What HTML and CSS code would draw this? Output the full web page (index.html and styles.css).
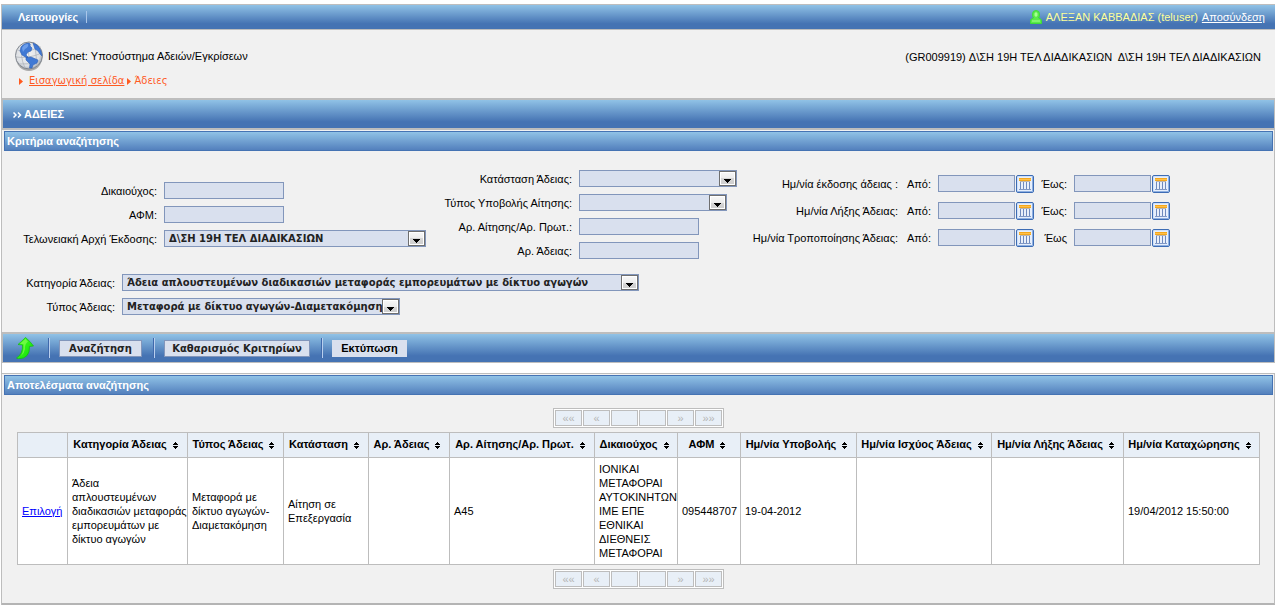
FILE: index.html
```html
<!DOCTYPE html>
<html lang="el">
<head>
<meta charset="utf-8">
<title>ICISnet: Υποσύστημα Αδειών/Εγκρίσεων</title>
<link rel="stylesheet" href="styles.css">
</head>
<body>
<svg class="defs" aria-hidden="true">
  <defs>
    <linearGradient id="btnFace" x1="0" y1="0" x2="0" y2="1"><stop offset="0" stop-color="#f6f6f6"/><stop offset=".5" stop-color="#ececec"/><stop offset=".5" stop-color="#d6d6d6"/><stop offset="1" stop-color="#cfcfcf"/></linearGradient>
    <radialGradient id="globeFace" cx=".45" cy=".45" r=".55"><stop offset="0" stop-color="#f4f4f4"/><stop offset=".8" stop-color="#dcdfe3"/><stop offset="1" stop-color="#a9afb8"/></radialGradient>
    <linearGradient id="green" x1="0" y1="0" x2="1" y2="1"><stop offset="0" stop-color="#4dff20"/><stop offset="1" stop-color="#0be00a"/></linearGradient>
    <symbol id="drop" viewBox="0 0 17 15"><rect x=".5" y=".5" width="16" height="14" fill="#fff" stroke="#6f6f6f"/><rect x="2" y="2" width="13" height="11" fill="url(#btnFace)"/><path d="M5 8h7v1h-1v1h-1v1H9v1H8v-1H7v-1H6V9H5z" fill="#000"/></symbol>
    <symbol id="cal" viewBox="0 0 18 18"><rect x=".5" y=".5" width="17" height="17" rx="1.5" fill="#cfe0f8" stroke="#3d6cb4"/><path d="M16.5 1v15.500H1" fill="none" stroke="#8fb0e2"/><rect x="2" y="2" width="14" height="14" fill="#e6effc"/><rect x="3" y="3" width="12" height="3" fill="#f5a81c"/><path d="M3 4.500h12" stroke="#ffc04a"/><path d="M4 6.500h10" stroke="#b9b4b0"/><rect x="4" y="7" width="10" height="8" fill="#fff"/><path d="M4.500 7v8M7.500 7v8M10.500 7v8M13.500 7v8" stroke="#6f8abd"/><path d="M6 7v8M9 7v8M12 7v8" stroke="#d4e0f5"/><path d="M3 14.500h12" stroke="#8098c6"/></symbol>
    <symbol id="sort" viewBox="0 0 5 7"><path d="M2 0h1v1h1v1h1v1H0V2h1V1h1zM0 4h5v1H4v1H3v1H2V6H1V5H0z" fill="#000"/></symbol>
    <symbol id="crumb" viewBox="0 0 4 7"><path d="M0 0l4 3.500L0 7z" fill="#ff5a1f"/></symbol>
  </defs>
</svg>
<div class="page">
  <header class="topbar">
    <nav class="menu"><a class="menu-item" href="#">Λειτουργίες</a></nav>
    <div class="user">
      <svg class="user-icon" viewBox="0 0 12 14" aria-hidden="true"><path d="M2.500 4Q2.500 .5 6 .5T9.500 4Q9.500 7 8.500 8Q11.500 8.500 11.500 11v2.500H.5V11Q.5 8.500 3.500 8Q2.500 7 2.500 4z" fill="#5be94b" stroke="#3fdc38"/><path d="M4.500 3.500Q6 1 7.500 3.500v2Q6 8 4.500 5.500zM2 10.500h8v1H2z" fill="#a5ff91"/></svg>
      <span class="user-name">ΑΛΕΞΑΝ ΚΑΒΒΑΔΙΑΣ (teluser)</span>
      <a class="logout" href="#">Αποσύνδεση</a>
    </div>
  </header>

  <div class="masthead">
    <div class="brand">
      <div class="brand-row">
        <svg class="globe" viewBox="0 0 30 30" aria-hidden="true"><ellipse cx="15" cy="17" rx="13" ry="13" fill="#8b8b8b" opacity=".7"/><circle cx="15" cy="14.500" r="13.500" fill="url(#globeFace)" stroke="#80868e"/><path d="M3 9Q12 12 27 6M2 16Q14 18 28 12M5 23Q15 24 26 20M9 3Q5 14 11 27M15 2Q13 14 18 27M21 3Q22 14 23 25" fill="none" stroke="#b0b5bc" stroke-width=".8"/><path d="M7 6Q10 2 15 2Q17 3 16 5L18 7L17 10L14 11L12 14L14 16L13 17L8 14L6 10zM19 2Q25 4 27 10L28 15L26 13L24 10L21 8L20 5zM12 16.500L17 16L24 19L23 22L19 24L18 27L15.500 27L16 23L12 19z" fill="#4079d4" stroke="#2f62b8" stroke-width=".6"/><path d="M8 7Q10 3 14 3Q15 6 11 8L9 11z" fill="#6c9eea"/></svg>
        <span>ICISnet: Υποσύστημα Αδειών/Εγκρίσεων</span>
      </div>
      <nav class="crumbs">
        <svg class="crumb-icon" aria-hidden="true"><use href="#crumb"/></svg>
        <a class="crumb-home" href="#">Εισαγωγική σελίδα</a>
        <svg class="crumb-icon" aria-hidden="true"><use href="#crumb"/></svg>
        <span>Άδειες</span>
      </nav>
    </div>
    <div class="office">(GR009919) Δ\ΣΗ 19Η ΤΕΛ ΔΙΑΔΙΚΑΣΙΩΝ&nbsp; Δ\ΣΗ 19Η ΤΕΛ ΔΙΑΔΙΚΑΣΙΩΝ</div>
  </div>

  <h1 class="title-bar"><svg class="chevrons" viewBox="0 0 9 6" aria-hidden="true"><path d="M.5 .5L3 3L.5 5.500M5 .5L7.500 3L5 5.500" fill="none" stroke="#fff" stroke-width="1.500"/></svg>ΑΔΕΙΕΣ</h1>

  <form class="criteria">
    <h2 class="panel-head">Κριτήρια αναζήτησης</h2>
    <div class="fields">
      <div class="group holder">
        <label for="holder">Δικαιούχος:</label><input class="box" id="holder" type="text">
        <label for="afm">ΑΦΜ:</label><input class="box" id="afm" type="text">
        <label for="customs">Τελωνειακή Αρχή Έκδοσης:</label>
        <span class="drop w-customs"><select class="box" id="customs"><option>Δ\ΣΗ 19Η ΤΕΛ ΔΙΑΔΙΚΑΣΙΩΝ</option></select><svg class="arrow" aria-hidden="true"><use href="#drop"/></svg></span>
      </div>
      <div class="group request">
        <label for="state">Κατάσταση Άδειας:</label>
        <span class="drop w-state"><select class="box" id="state"><option></option></select><svg class="arrow" aria-hidden="true"><use href="#drop"/></svg></span>
        <label for="submit-type">Τύπος Υποβολής Αίτησης:</label>
        <span class="drop w-submit"><select class="box" id="submit-type"><option></option></select><svg class="arrow" aria-hidden="true"><use href="#drop"/></svg></span>
        <label for="protocol">Αρ. Αίτησης/Αρ. Πρωτ.:</label><input class="box" id="protocol" type="text">
        <label for="number">Αρ. Άδειας:</label><input class="box" id="number" type="text">
      </div>
      <div class="dates">
        <span class="date-name">Ημ/νία έκδοσης άδειας :</span>
        <label for="d1">Από:</label><span class="date"><input class="box" id="d1" type="text"><button class="cal" type="button" aria-label="Ημερολόγιο"><svg aria-hidden="true"><use href="#cal"/></svg></button></span>
        <label for="d2">Έως:</label><span class="date"><input class="box" id="d2" type="text"><button class="cal" type="button" aria-label="Ημερολόγιο"><svg aria-hidden="true"><use href="#cal"/></svg></button></span>
        <span class="date-name">Ημ/νία Λήξης Άδειας:</span>
        <label for="d3">Από:</label><span class="date"><input class="box" id="d3" type="text"><button class="cal" type="button" aria-label="Ημερολόγιο"><svg aria-hidden="true"><use href="#cal"/></svg></button></span>
        <label for="d4">Έως:</label><span class="date"><input class="box" id="d4" type="text"><button class="cal" type="button" aria-label="Ημερολόγιο"><svg aria-hidden="true"><use href="#cal"/></svg></button></span>
        <span class="date-name">Ημ/νία Τροποποίησης Άδειας:</span>
        <label for="d5">Από:</label><span class="date"><input class="box" id="d5" type="text"><button class="cal" type="button" aria-label="Ημερολόγιο"><svg aria-hidden="true"><use href="#cal"/></svg></button></span>
        <label for="d6">Έως</label><span class="date"><input class="box" id="d6" type="text"><button class="cal" type="button" aria-label="Ημερολόγιο"><svg aria-hidden="true"><use href="#cal"/></svg></button></span>
      </div>
    </div>
    <div class="group kind">
      <label for="category">Κατηγορία Άδειας:</label>
      <span class="drop w-category"><select class="box" id="category"><option>Άδεια απλουστευμένων διαδικασιών μεταφοράς εμπορευμάτων με δίκτυο αγωγών</option></select><svg class="arrow" aria-hidden="true"><use href="#drop"/></svg></span>
      <label for="type">Τύπος Άδειας:</label>
      <span class="drop w-type"><select class="box" id="type"><option>Μεταφορά με δίκτυο αγωγών-Διαμετακόμηση</option></select><svg class="arrow" aria-hidden="true"><use href="#drop"/></svg></span>
    </div>
    <div class="toolbar">
      <button class="back" type="button" aria-label="Επιστροφή"><svg viewBox="0 0 18 22" aria-hidden="true"><path d="M.5 21Q7 17 6.500 8L2 7.500Q6 4 9.500 .5Q14 4 17.500 9L13.500 9.500Q14 21.500 2.500 21.800z" fill="url(#green)" stroke="#12b810" stroke-width=".7"/><path d="M4 6.800L9.500 2L12 4.500Q8.500 7 9 12Q8.500 16 5 19Q8 14 7.500 7.200z" fill="#a4ff6b" opacity=".5"/></svg></button>
      <button class="btn w-search" type="button">Αναζήτηση</button>
      <button class="btn w-clear" type="button">Καθαρισμός Κριτηρίων</button>
      <button class="btn print" type="button">Εκτύπωση</button>
    </div>
  </form>

  <section class="results">
    <h2 class="panel-head">Αποτελέσματα αναζήτησης</h2>
    <div class="results-body">
      <div class="pager"><span>««</span><span>«</span><span></span><span></span><span>»</span><span>»»</span></div>
      <table class="grid">
        <colgroup><col class="c1"><col class="c2"><col class="c3"><col class="c4"><col class="c5"><col class="c6"><col class="c7"><col class="c8"><col class="c9"><col class="c10"><col class="c11"><col class="c12"></colgroup>
        <thead><tr>
          <th></th>
          <th>Κατηγορία Άδειας<svg class="sort"><use href="#sort"/></svg></th>
          <th>Τύπος Άδειας<svg class="sort"><use href="#sort"/></svg></th>
          <th>Κατάσταση<svg class="sort"><use href="#sort"/></svg></th>
          <th>Αρ. Άδειας<svg class="sort"><use href="#sort"/></svg></th>
          <th>Αρ. Αίτησης/Αρ. Πρωτ.<svg class="sort"><use href="#sort"/></svg></th>
          <th>Δικαιούχος<svg class="sort"><use href="#sort"/></svg></th>
          <th>ΑΦΜ<svg class="sort"><use href="#sort"/></svg></th>
          <th>Ημ/νία Υποβολής<svg class="sort"><use href="#sort"/></svg></th>
          <th>Ημ/νία Ισχύος Άδειας<svg class="sort"><use href="#sort"/></svg></th>
          <th>Ημ/νία Λήξης Άδειας<svg class="sort"><use href="#sort"/></svg></th>
          <th>Ημ/νία Καταχώρησης<svg class="sort"><use href="#sort"/></svg></th>
        </tr></thead>
        <tbody><tr>
          <td><a href="#">Επιλογή</a></td>
          <td>Άδεια<br>απλουστευμένων<br>διαδικασιών μεταφοράς<br>εμπορευμάτων με<br>δίκτυο αγωγών</td>
          <td>Μεταφορά με<br>δίκτυο αγωγών-<br>Διαμετακόμηση</td>
          <td>Αίτηση σε<br>Επεξεργασία</td>
          <td></td>
          <td>Α45</td>
          <td>ΙΟΝΙΚΑΙ<br>ΜΕΤΑΦΟΡΑΙ<br>ΑΥΤΟΚΙΝΗΤΩΝ<br>ΙΜΕ ΕΠΕ<br>ΕΘΝΙΚΑΙ<br>ΔΙΕΘΝΕΙΣ<br>ΜΕΤΑΦΟΡΑΙ</td>
          <td>095448707</td>
          <td>19-04-2012</td>
          <td></td>
          <td></td>
          <td>19/04/2012 15:50:00</td>
        </tr></tbody>
      </table>
      <div class="pager"><span>««</span><span>«</span><span></span><span></span><span>»</span><span>»»</span></div>
    </div>
  </section>
</div>
</body>
</html>
```
FILE: styles.css
```css
* { box-sizing: border-box; }
body {
  margin: 0;
  background: #fff;
  color: #000;
  font-family: "Liberation Sans", Arial, sans-serif;
  font-size: 11px;
  line-height: 14px;
}
.defs { position: absolute; width: 0; height: 0; }
.page { margin-top: 4px; margin-left: 1px; border-left: 1px solid #bdbdbd; }

.topbar, .title-bar, .toolbar {
  display: flex;
  align-items: center;
  background: linear-gradient(#90c2e6, #4573b3 78%, #4573b3);
}
.topbar {
  justify-content: space-between;
  height: 26px;
  padding: 0 10px 0 16px;
  border: 1px solid #bdbdbd;
  border-width: 1px 0;
}
.menu-item {
  padding-right: 8px;
  border-right: 1px solid #a9c6ea;
  color: #fff;
  font-weight: bold;
  text-decoration: none;
  line-height: 10px;
}
.user { display: flex; align-items: center; gap: 4px; }
.user-icon { width: 12px; height: 14px; }
.user-name { color: #ffff99; }
.logout { color: #fff; }

.masthead {
  display: flex;
  justify-content: space-between;
  min-height: 68px;
  padding: 10px 14px 0 12px;
  background: #f1f1f1;
}
.brand-row { display: flex; align-items: center; gap: 4px; height: 32px; }
.globe { width: 30px; height: 30px; }
.crumbs {
  display: flex;
  align-items: center;
  gap: 3px;
  padding-left: 5px;
  margin-top: 2px;
  color: #ff5a1f;
  font-family: "DejaVu Sans", Verdana, sans-serif;
  font-size: 10px;
}
.crumb-icon { width: 4px; height: 7px; }
.crumb-home { margin-left: 3px; color: #ff5a1f; }
.office { padding-top: 10px; }

.title-bar {
  gap: 2px;
  height: 32px;
  margin: 0;
  padding-left: 10px;
  border: 2px solid #bdbdbd;
  border-left: 1px solid #bdbdbd;
  border-right-width: 1px;
  color: #fff;
  font-size: 11px;
}
.chevrons { width: 9px; height: 6px; margin-top: 2px; }

.criteria, .results {
  border-right: 1px solid #bdbdbd;
  background: #f1f1f1;
}
.panel-head {
  height: 20px;
  margin: 0 1px 0 2px;
  padding-left: 2px;
  border: 1px solid #4573b3;
  background: linear-gradient(#90c2e6, #5380bd);
  color: #fff;
  font-size: 11px;
  line-height: 18px;
}
.criteria { padding-top: 1px; }
.fields {
  display: grid;
  grid-template-columns: 424px 322px 1fr;
  padding-top: 19px;
}
.group {
  display: grid;
  grid-auto-rows: 24px;
  column-gap: 7px;
  justify-items: start;
}
.group label, .date-name, .dates label { justify-self: end; padding-top: 2px; white-space: nowrap; }
.holder { grid-template-columns: 155px 1fr; padding-top: 12px; }
.request { grid-template-columns: 146px 1fr; }
.kind { grid-template-columns: 113px 1fr; padding-top: 8px; }
.dates {
  display: grid;
  grid-template-columns: 150px 26px auto 26px auto;
  grid-auto-rows: 27px;
  column-gap: 7px;
  justify-content: start;
  padding-top: 5px;
}
.box {
  width: 120px;
  height: 17px;
  margin: 0;
  padding: 0 4px;
  border: 1px solid #8296bb;
  border-radius: 0;
  background: #d9e0ee;
  color: #222;
  font-family: "DejaVu Sans", Verdana, sans-serif;
  font-size: 10px;
  font-weight: bold;
}
select.box { appearance: none; display: block; width: 100%; line-height: 15px; }
.drop { position: relative; }
.arrow { position: absolute; top: 1px; right: 1px; width: 17px; height: 15px; pointer-events: none; }
.w-customs { width: 262px; }
.w-state { width: 158px; }
.w-submit { width: 148px; }
.w-category { width: 517px; }
.w-type { width: 278px; }
.date { display: flex; gap: 1px; height: 18px; }
.date .box { width: 77px; }
.cal { width: 18px; height: 18px; padding: 0; border: 0; background: none; }
.cal svg { display: block; width: 18px; height: 18px; }

.toolbar {
  height: 31px;
  margin-top: 10px;
  padding-left: 13px;
  border: 1px solid #bdbdbd;
  border-width: 2px 0 1px 1px;
}
.back { width: 18px; height: 22px; margin-right: 14px; padding: 0; border: 0; background: none; }
.back svg { display: block; width: 18px; height: 22px; }
.btn {
  position: relative;
  height: 17px;
  margin: 0 11px;
  padding: 0;
  border: 1px solid #8296bb;
  background: #d9e0ee;
  color: #222;
  font-family: "DejaVu Sans", Verdana, sans-serif;
  font-size: 10px;
  font-weight: bold;
  line-height: 15px;
  white-space: nowrap;
}
.btn::before {
  content: "";
  position: absolute;
  top: -3px;
  left: -12px;
  width: 2px;
  height: 20px;
  background: linear-gradient(to right, #3f69ac 50%, #b8cfee 50%);
}
.w-search { width: 83px; }
.w-clear { width: 146px; }
.print {
  width: 75px;
  border-color: #d9e0ee;
  color: #000;
  font-family: "Liberation Sans", Arial, sans-serif;
  font-size: 11px;
}

.results { margin-top: 10px; padding-top: 1px; border: 1px solid #bdbdbd; border-left: 0; border-bottom: 2px solid #b4b4b4; }
.results-body {
  display: flex;
  flex-direction: column;
  align-items: center;
  gap: 4px;
  padding: 13px 14px 14px 15px;
}
.pager {
  display: flex;
  gap: 1px;
  padding: 1px;
  border: 1px solid #bdbdbd;
  background: #fff;
}
.pager span {
  width: 27px;
  height: 16px;
  border: 1px solid #bdbdbd;
  background: #e8eff7;
  color: #b5b5b5;
  text-align: center;
}
.grid {
  width: 100%;
  table-layout: fixed;
  border-collapse: collapse;
  background: #fff;
}
.grid th, .grid td { padding: 4px; border: 1px solid #bdbdbd; white-space: nowrap; }
.grid td { text-align: left; }
.grid th { height: 25px; padding-top: 3px; padding-bottom: 5px; background: #e8eff7; text-align: center; }
.grid td { height: 107px; }
.grid a { color: #00f; }
.sort { width: 5px; height: 7px; margin: 0 4px 0 6px; vertical-align: -1px; }
.c1 { width: 50px; }
.c2 { width: 120px; }
.c3 { width: 96px; }
.c4 { width: 85px; }
.c5 { width: 81px; }
.c6 { width: 145px; }
.c7 { width: 83px; }
.c8 { width: 63px; }
.c9 { width: 116px; }
.c10 { width: 135px; }
.c11 { width: 132px; }
.c12 { width: 136px; }
```
